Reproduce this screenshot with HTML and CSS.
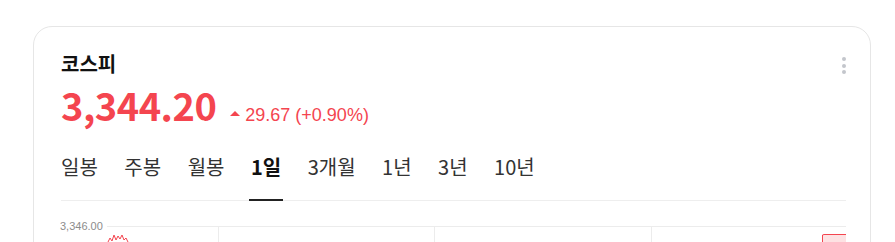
FILE: index.html
```html
<!DOCTYPE html>
<html lang="ko">
<head>
<meta charset="utf-8">
<link rel="stylesheet" href="styles.css">
</head>
<body>
<div class="card">
  <div class="head">
    <h2 class="title">코스피</h2>
    <button class="more" aria-label="더보기"><span></span><span></span><span></span></button>
  </div>
  <div class="quote">
    <span class="price">3,344.20</span>
    <span class="change"><span class="tri"></span>29.67 (+0.90%)</span>
  </div>
  <ul class="tabs">
    <li>일봉</li>
    <li>주봉</li>
    <li>월봉</li>
    <li class="active">1일</li>
    <li>3개월</li>
    <li>1년</li>
    <li>3년</li>
    <li>10년</li>
  </ul>
  <div class="chart">
    <svg width="785" height="60" viewBox="0 0 785 60">
      <line x1="46" y1="25.5" x2="785" y2="25.5" stroke="#ececec" stroke-width="1"/>
      <text x="-1" y="29" class="axis">3,346.00</text>
      <line x1="157.5" y1="25.5" x2="157.5" y2="60" stroke="#ececec"/>
      <line x1="373.5" y1="25.5" x2="373.5" y2="60" stroke="#ececec"/>
      <line x1="590.5" y1="25.5" x2="590.5" y2="60" stroke="#ececec"/>
      <polyline points="47,41 49,37 51,40 53,34 55,39 57,35 59,38 61,34 63,39 65,37 67,41" fill="none" stroke="#f4454f" stroke-width="1"/>
      <path d="M761 60 L761 34 L763 33 L785 33 L785 60 Z" fill="#fde2e3"/>
      <path d="M761.5 60 L761.5 34 L763 33.5 L785 33.5" fill="none" stroke="#f4454f" stroke-width="1"/>
    </svg>
  </div>
</div>
</body>
</html>
```
FILE: styles.css
```css
html, body {
  margin: 0;
  padding: 0;
  background: #fff;
}
body {
  padding: 26px 0 0 33px;
  font-family: "Noto Sans CJK KR", "Noto Sans", sans-serif;
  color: #222;
}
.card {
  width: 838px;
  height: 300px;
  border: 1px solid #e6e6e6;
  border-radius: 19px;
  padding: 24px 24px 0 27px;
  box-sizing: border-box;
  overflow: hidden;
}
.head {
  display: flex;
  justify-content: space-between;
  align-items: flex-start;
}
.title {
  margin: 0;
  font-size: 20px;
  line-height: 26px;
  font-weight: 700;
  color: #111;
}
.more {
  border: 0;
  background: none;
  padding: 0;
  margin: 6px -2px 0 0;
  width: 8px;
  display: flex;
  flex-direction: column;
  align-items: center;
  gap: 2.5px;
}
.more span {
  width: 4px;
  height: 4px;
  border-radius: 50%;
  background: #c3c6cc;
}
.quote {
  display: flex;
  align-items: baseline;
  margin-top: 4px;
}
.price {
  font-size: 38px;
  line-height: 48px;
  font-weight: 700;
  color: #f4454f;
  letter-spacing: -0.5px;
}
.change {
  margin-left: 14px;
  font-family: "Liberation Sans", Arial, sans-serif;
  font-size: 18px;
  color: #f4454f;
}
.tri {
  display: inline-block;
  width: 0;
  height: 0;
  border-left: 5px solid transparent;
  border-right: 5px solid transparent;
  border-bottom: 5px solid #f4454f;
  margin-right: 5px;
  vertical-align: 5px;
}
.tabs {
  list-style: none;
  margin: 25px 0 0;
  padding: 0;
  display: flex;
  gap: 26.5px;
  border-bottom: 1px solid #eeeeee;
}
.tabs li {
  font-size: 20px;
  line-height: 26px;
  color: #333;
  padding: 0 0 19px;
  margin-bottom: -1px;
  border-bottom: 2px solid transparent;
}
.tabs li.active {
  font-weight: 700;
  color: #111;
  border-bottom-color: #222;
  padding: 0 2px 19px;
  margin: 0 -2px -1px;
}
.chart {
  display: flex;
}
.chart svg {
  display: block;
  overflow: visible;
}
.axis {
  font-family: "Liberation Sans", Arial, sans-serif;
  font-size: 11px;
  fill: #8c8c8c;
}
```
